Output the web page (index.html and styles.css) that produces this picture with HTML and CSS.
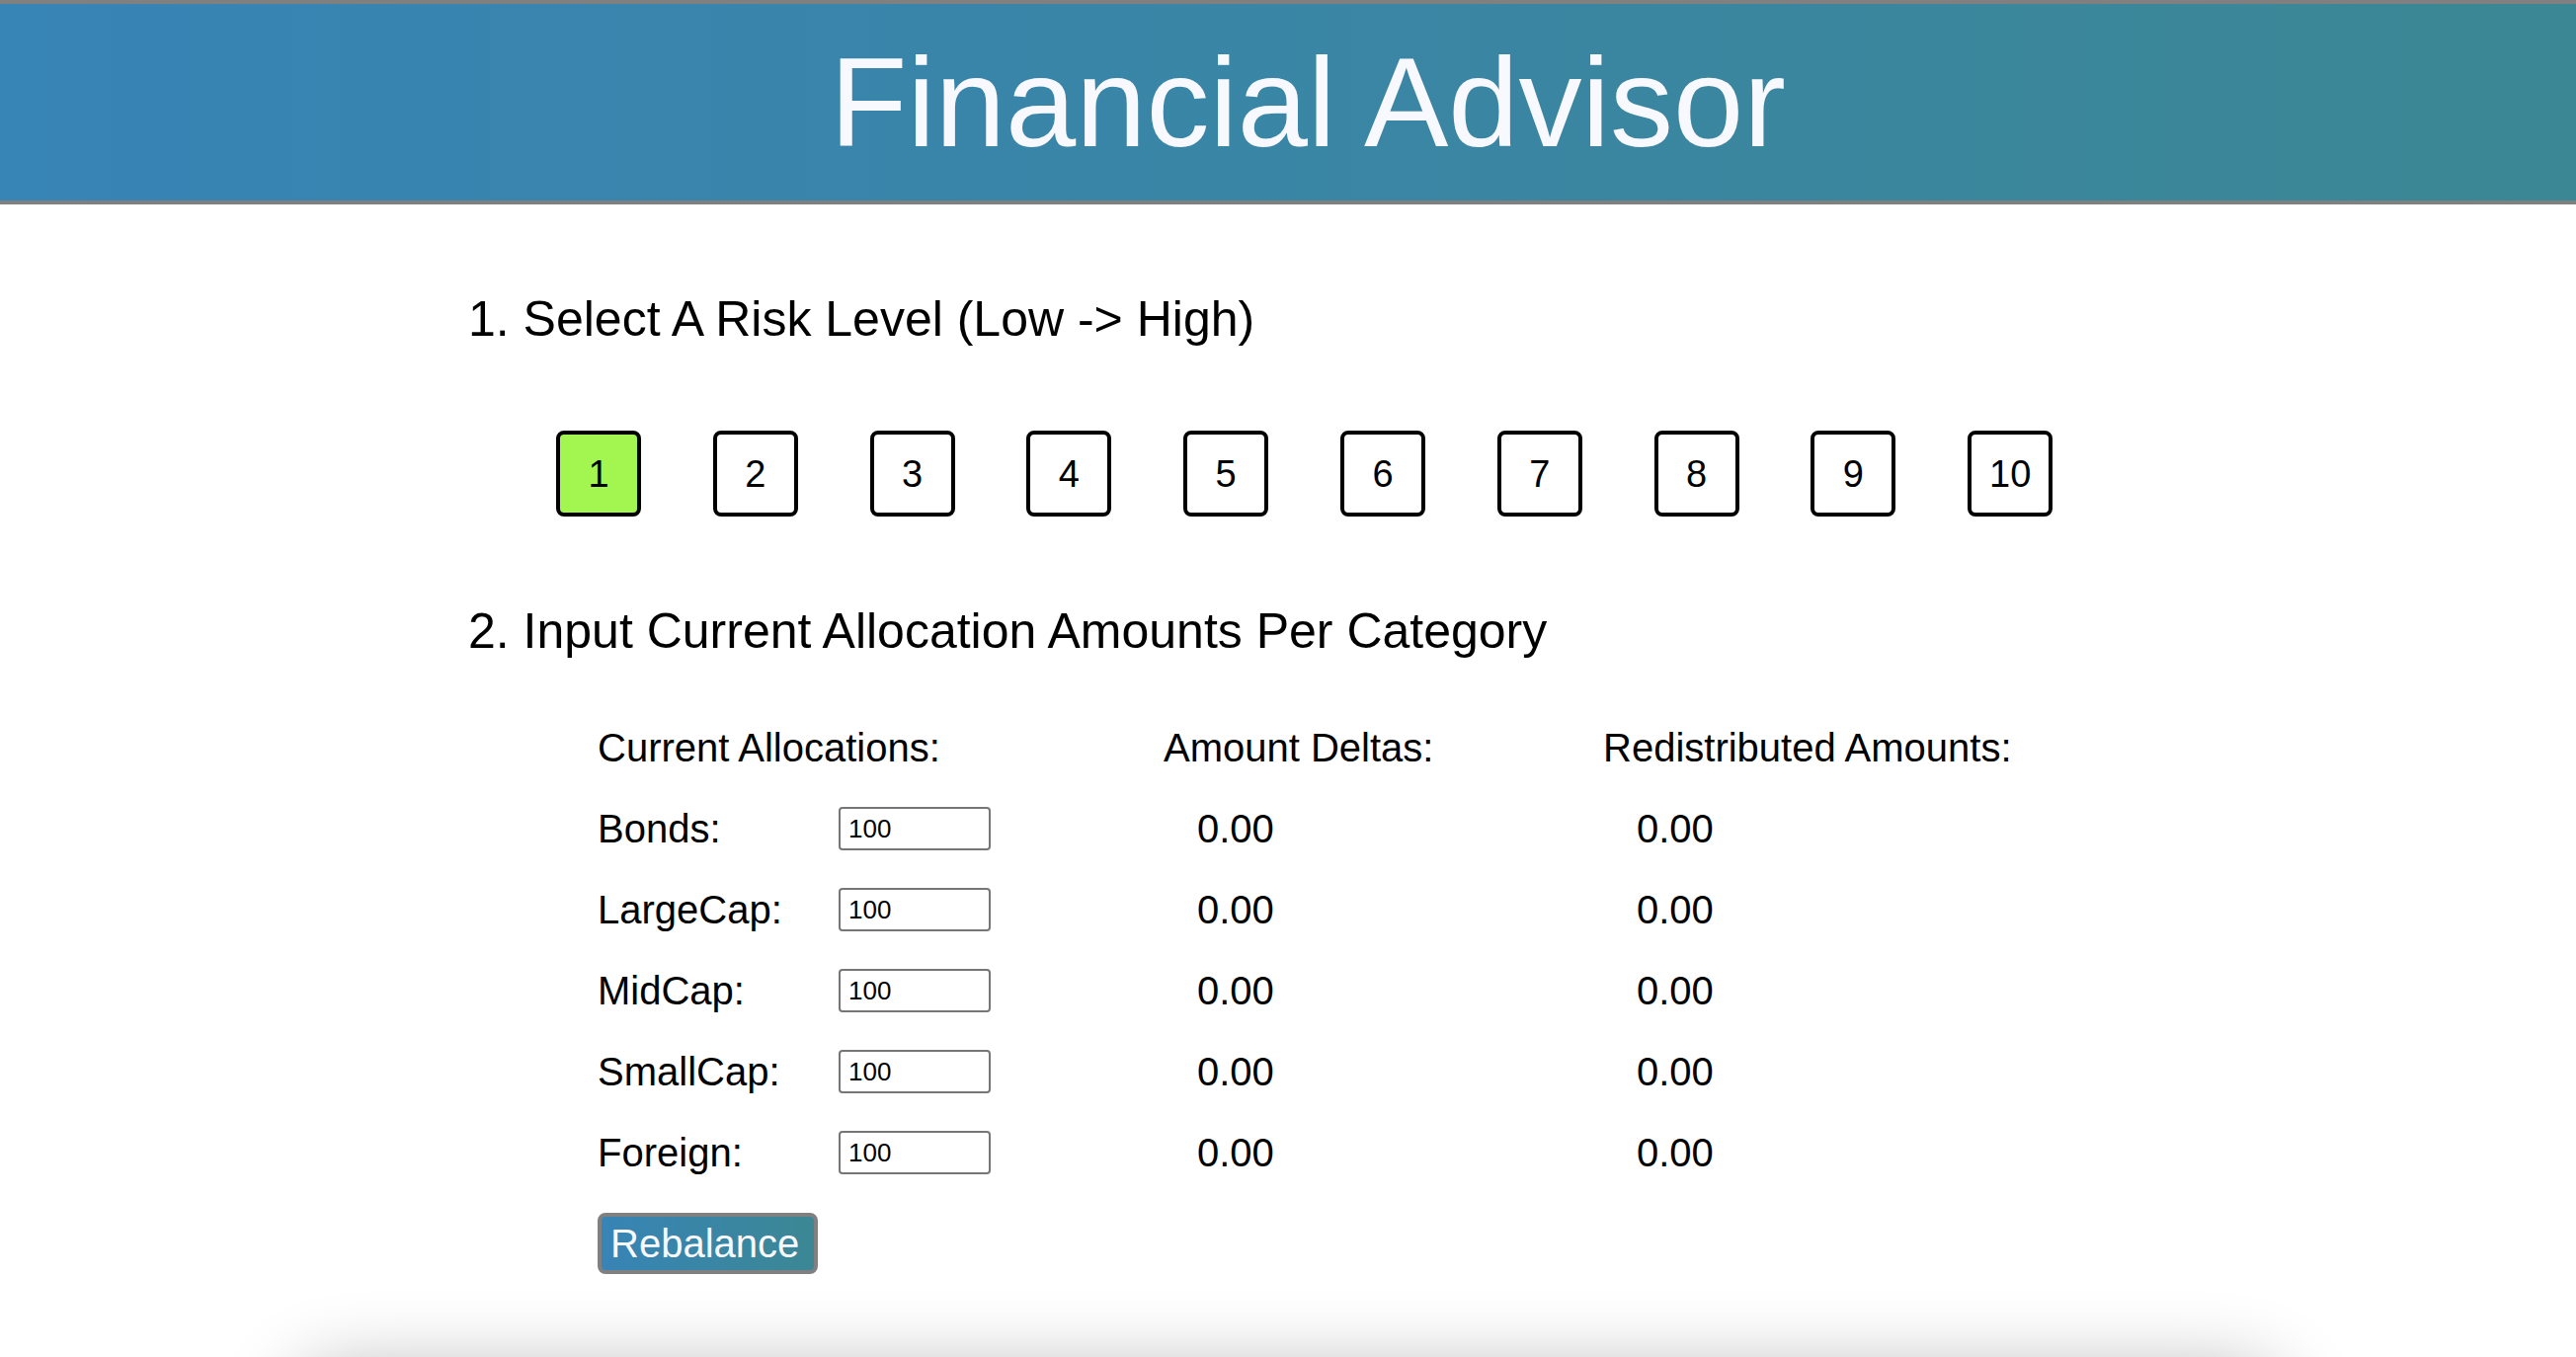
FILE: index.html
```html
<!DOCTYPE html>
<html lang="en">
<head>
<meta charset="utf-8">
<title>Financial Advisor</title>
<link rel="stylesheet" href="styles.css">
</head>
<body>
<header class="masthead">
  <h1 class="title">Financial Advisor</h1>
</header>
<main class="content">
  <h2 class="step">1. Select A Risk Level (Low -&gt; High)</h2>
  <div class="risk-row">
    <div class="risk risk-active">1</div>
    <div class="risk">2</div>
    <div class="risk">3</div>
    <div class="risk">4</div>
    <div class="risk">5</div>
    <div class="risk">6</div>
    <div class="risk">7</div>
    <div class="risk">8</div>
    <div class="risk">9</div>
    <div class="risk">10</div>
  </div>
  <h2 class="step">2. Input Current Allocation Amounts Per Category</h2>
  <div class="alloc">
    <div class="alloc-head span2">Current Allocations:</div>
    <div class="alloc-head">Amount Deltas:</div>
    <div class="alloc-head">Redistributed Amounts:</div>

    <div class="label">Bonds:</div>
    <div class="cell"><input class="amount" type="text" value="100"></div>
    <div class="value">0.00</div>
    <div class="value">0.00</div>

    <div class="label">LargeCap:</div>
    <div class="cell"><input class="amount" type="text" value="100"></div>
    <div class="value">0.00</div>
    <div class="value">0.00</div>

    <div class="label">MidCap:</div>
    <div class="cell"><input class="amount" type="text" value="100"></div>
    <div class="value">0.00</div>
    <div class="value">0.00</div>

    <div class="label">SmallCap:</div>
    <div class="cell"><input class="amount" type="text" value="100"></div>
    <div class="value">0.00</div>
    <div class="value">0.00</div>

    <div class="label">Foreign:</div>
    <div class="cell"><input class="amount" type="text" value="100"></div>
    <div class="value">0.00</div>
    <div class="value">0.00</div>
  </div>
  <button class="rebalance" type="button">Rebalance</button>
</main>
<section class="results"></section>
</body>
</html>
```

FILE: styles.css
```css
html, body {
  margin: 0;
  padding: 0;
  background: #ffffff;
}

body {
  font-family: "Liberation Sans", Arial, Helvetica, sans-serif;
  color: #000000;
}

.masthead {
  background: linear-gradient(to right, #3784b6, #3c8794);
  border-top: 4px solid #808080;
  border-bottom: 4px solid #808080;
  padding: 26px 0 26px 40px;
  text-align: center;
}

.title {
  margin: 0;
  font-size: 128px;
  font-weight: normal;
  line-height: 147px;
  color: #f8f8ff;
}

.content {
  width: 1660px;
  margin: 0 auto;
}

.step {
  margin: 86px 0 0;
  font-size: 50px;
  font-weight: normal;
  line-height: 60px;
}

.risk-row {
  display: flex;
  gap: 72.8px;
  margin-top: 83px;
  padding-left: 89px;
}

.risk {
  box-sizing: border-box;
  width: 86px;
  height: 87px;
  padding-top: 2px;
  border: 4px solid #000000;
  border-radius: 8px;
  display: flex;
  align-items: center;
  justify-content: center;
  font-size: 38px;
  background: #ffffff;
}

.risk-active {
  background: #a3f64f;
}

.alloc {
  display: grid;
  grid-template-columns: 244px 329px 445px auto;
  grid-auto-rows: 82px;
  margin-top: 47px;
  padding-left: 131px;
  font-size: 40px;
  line-height: 82px;
}

.span2 {
  grid-column: span 2;
}

.cell {
  display: flex;
  align-items: center;
}

.value {
  padding-left: 34px;
}

.amount {
  box-sizing: border-box;
  width: 154px;
  height: 44px;
  margin: 0;
  padding: 0 8px;
  border: 2px solid #767676;
  border-radius: 4px;
  font-family: "Liberation Sans", Arial, sans-serif;
  font-size: 26px;
  color: #000000;
  background: #ffffff;
}

.rebalance {
  display: block;
  box-sizing: border-box;
  height: 62px;
  margin: 20px 0 0 131px;
  padding: 0 15px 0 9px;
  border: 4px solid #808080;
  border-radius: 8px;
  background: linear-gradient(to right, #3784b6, #3c8794);
  color: #f8f8ff;
  font-family: "Liberation Sans", Arial, sans-serif;
  font-size: 40px;
  line-height: 54px;
}

.results {
  width: 2008px;
  height: 400px;
  margin: 101px auto 0;
  border-radius: 40px;
  background: #ffffff;
  box-shadow: 0 0 80px rgba(0, 0, 0, 0.32);
}
```
